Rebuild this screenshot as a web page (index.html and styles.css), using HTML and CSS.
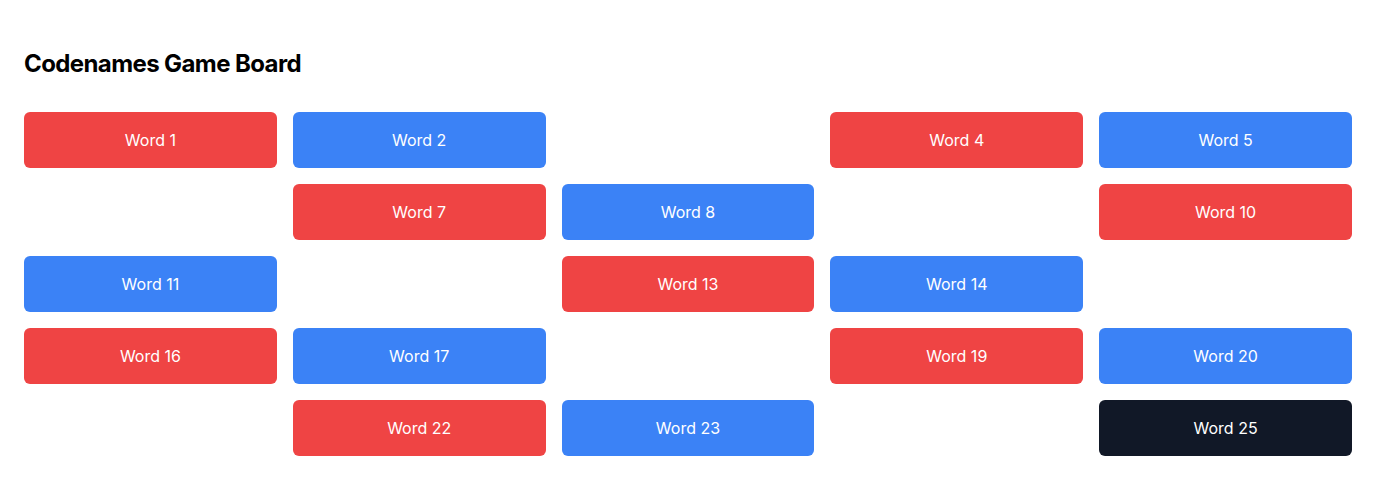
FILE: index.html
```html
<!DOCTYPE html>
<html lang="en">
  <head>
    <meta charset="UTF-8" />
    <meta name="viewport" content="width=device-width, initial-scale=1.0" />
    <title>Codenames Game Board</title>
    <link rel="stylesheet" href="styles.css">
  </head>
  <body>
    <main class="board-page">
      <h1>Codenames Game Board</h1>
      <section class="board">
        <div class="card red">Word 1</div>
        <div class="card blue">Word 2</div>
        <div class="card neutral">Word 3</div>
        <div class="card red">Word 4</div>
        <div class="card blue">Word 5</div>
        <div class="card neutral">Word 6</div>
        <div class="card red">Word 7</div>
        <div class="card blue">Word 8</div>
        <div class="card neutral">Word 9</div>
        <div class="card red">Word 10</div>
        <div class="card blue">Word 11</div>
        <div class="card neutral">Word 12</div>
        <div class="card red">Word 13</div>
        <div class="card blue">Word 14</div>
        <div class="card neutral">Word 15</div>
        <div class="card red">Word 16</div>
        <div class="card blue">Word 17</div>
        <div class="card neutral">Word 18</div>
        <div class="card red">Word 19</div>
        <div class="card blue">Word 20</div>
        <div class="card neutral">Word 21</div>
        <div class="card red">Word 22</div>
        <div class="card blue">Word 23</div>
        <div class="card neutral">Word 24</div>
        <div class="card assassin">Word 25</div>
      </section>
    </main>
  </body>
</html>
```

FILE: styles.css
```css
* {
  margin: 0;
  padding: 0;
  box-sizing: border-box;
}

body {
  font-family: Inter, "Noto Sans", sans-serif;
  background-color: #fff;
  color: #000;
}

/* LAYOUT */
.board-page {
  padding: 48px 24px;
}

h1 {
  font-size: 24px;
  line-height: 32px;
  font-weight: 700;
  letter-spacing: -0.025em;
  margin-bottom: 32px;
}

.board {
  display: grid;
  grid-template-columns: repeat(5, 1fr);
  gap: 16px;
}

.card {
  height: 56px;
  border-radius: 6px;
  display: flex;
  align-items: center;
  justify-content: center;
  font-size: 16px;
  color: #fff;
}

.red {
  background-color: #ef4444;
}

.blue {
  background-color: #3b82f6;
}

.neutral {
  background-color: #fff;
}

.assassin {
  background-color: #111827;
}
```
